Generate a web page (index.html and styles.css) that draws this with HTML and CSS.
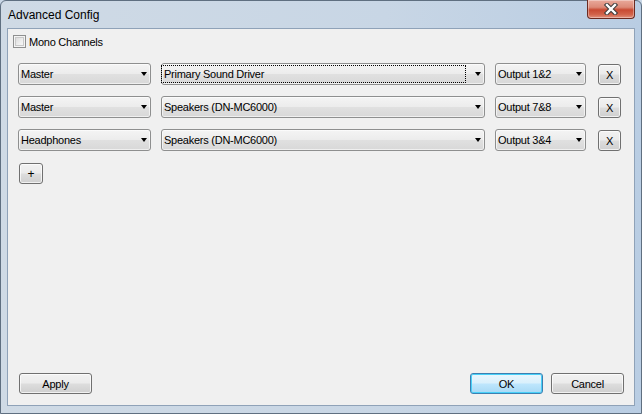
FILE: index.html
```html
<!DOCTYPE html>
<html>
<head>
<meta charset="utf-8">
<link rel="stylesheet" href="styles.css">
</head>
<body>
<div class="window">
  <div class="titlebar">
    <span class="title">Advanced Config</span>
    <div class="close">
      <svg width="18" height="12" viewBox="0 0 18 12">
        <path d="M5 2 L13 10 M13 2 L5 10" stroke="#3a3a3a" stroke-width="4.4" stroke-linecap="square" fill="none"/>
        <path d="M5 2 L13 10 M13 2 L5 10" stroke="#ffffff" stroke-width="2.4" stroke-linecap="square" fill="none"/>
      </svg>
    </div>
  </div>
  <div class="client">
    <label class="mono"><span class="checkbox"></span><span>Mono Channels</span></label>
    <div class="rows">
      <div class="row">
        <div class="combo c1"><span class="ctext">Master</span><span class="arrow"></span></div>
        <div class="combo c2 focused"><span class="ctext"><span class="focus">Primary Sound Driver</span></span><span class="arrow"></span></div>
        <div class="combo c3"><span class="ctext">Output 1&amp;2</span><span class="arrow"></span></div>
        <div class="btn xbtn">X</div>
      </div>
      <div class="row">
        <div class="combo c1"><span class="ctext">Master</span><span class="arrow"></span></div>
        <div class="combo c2"><span class="ctext">Speakers (DN-MC6000)</span><span class="arrow"></span></div>
        <div class="combo c3"><span class="ctext">Output 7&amp;8</span><span class="arrow"></span></div>
        <div class="btn xbtn">X</div>
      </div>
      <div class="row">
        <div class="combo c1"><span class="ctext">Headphones</span><span class="arrow"></span></div>
        <div class="combo c2"><span class="ctext">Speakers (DN-MC6000)</span><span class="arrow"></span></div>
        <div class="combo c3"><span class="ctext">Output 3&amp;4</span><span class="arrow"></span></div>
        <div class="btn xbtn">X</div>
      </div>
    </div>
    <div class="btn plus">+</div>
    <div class="footer">
      <div class="btn wide">Apply</div>
      <div class="spacer"></div>
      <div class="btn wide default">OK</div>
      <div class="btn wide">Cancel</div>
    </div>
  </div>
</div>
</body>
</html>
```
FILE: styles.css
```css
html, body {
  margin: 0;
  padding: 0;
  background: #c9d7e6;
}
.window {
  width: 642px;
  height: 414px;
  box-sizing: border-box;
  display: flex;
  flex-direction: column;
  background: linear-gradient(90deg, #cfdae5 0%, #c8d6e5 60%, #b9cde3 100%);
  border: 1px solid #5f6f80;
  border-radius: 6px 6px 0 0;
  font-family: "Liberation Sans", Arial, sans-serif;
  font-size: 11px;
  letter-spacing: -0.25px;
  color: #000;
}
.titlebar {
  height: 27px;
  display: flex;
  align-items: flex-start;
  justify-content: space-between;
}
.title {
  font-size: 12px;
  letter-spacing: 0;
  margin: 7px 0 0 7px;
  color: #000;
}
.close {
  width: 48px;
  height: 19px;
  margin-right: 6px;
  margin-top: -1px;
  box-sizing: border-box;
  border: 1px solid #6b2a20;
  border-top: none;
  border-radius: 0 0 4px 4px;
  background: linear-gradient(180deg, #e9a99b 0%, #dc8a78 40%, #c84a33 55%, #d2634a 80%, #e1907d 100%);
  box-shadow: inset 0 0 0 1px rgba(255,255,255,0.35);
  display: flex;
  align-items: center;
  justify-content: center;
}
.close svg { display: block; }
.client {
  flex: 1;
  margin: 0 6px 7px 6px;
  border: 1px solid #8fa2b8;
  background: #f0f0f0;
  display: flex;
  flex-direction: column;
}
.mono {
  display: flex;
  align-items: center;
  gap: 3px;
  margin: 6px 0 0 5px;
  height: 13px;
}
.checkbox {
  width: 13px;
  height: 13px;
  box-sizing: border-box;
  border: 1px solid #8e8f8f;
  background: linear-gradient(135deg, #d4d4d4 0%, #f0f0f0 60%, #fbfbfb 100%);
  box-shadow: inset 0 0 0 1px #f4f4f4, inset 0 0 0 2px #c9c9c9;
}
.rows {
  display: flex;
  flex-direction: column;
  gap: 11px;
  margin: 15px 0 0 10px;
}
.row {
  display: flex;
  align-items: flex-start;
  height: 22px;
}
.combo {
  height: 22px;
  box-sizing: border-box;
  border: 1px solid #8e8f8f;
  border-radius: 3px;
  background: linear-gradient(180deg, #f4f4f4 0%, #ececec 48%, #e0e0e0 52%, #d8d8d8 100%);
  box-shadow: inset 0 0 0 1px rgba(255,255,255,0.6);
  display: flex;
  align-items: center;
  justify-content: space-between;
}
.c1 { width: 133px; margin-right: 10px; }
.c2 { width: 324px; margin-right: 10px; }
.c3 { width: 91px; margin-right: 12px; }
.ctext {
  padding-left: 2px;
  line-height: 13px;
  white-space: nowrap;
}
.focused .ctext {
  flex: 1;
  padding-left: 0;
  margin-right: 10px;
}
.focus {
  display: block;
  outline: 1px dotted #000;
  outline-offset: 0;
  padding: 1px 1px 1px 2px;
  line-height: 14px;
}
.arrow {
  width: 0;
  height: 0;
  border-left: 3.5px solid transparent;
  border-right: 3.5px solid transparent;
  border-top: 4px solid #000;
  margin-right: 3px;
}
.btn {
  box-sizing: border-box;
  border: 1px solid #707070;
  border-radius: 3px;
  background: linear-gradient(180deg, #f2f2f2 0%, #ebebeb 48%, #dddddd 52%, #cfcfcf 100%);
  box-shadow: inset 0 0 0 1px rgba(255,255,255,0.7);
  display: flex;
  align-items: center;
  justify-content: center;
  height: 22px;
}
.xbtn {
  width: 23px;
  height: 21px;
  margin-top: 1px;
}
.plus {
  width: 24px;
  height: 21px;
  margin: 12px 0 0 11px;
  font-size: 12px;
}
.footer {
  margin-top: auto;
  display: flex;
  align-items: center;
  padding: 0 10px 11px 11px;
  gap: 8px;
}
.spacer { flex: 1; }
.wide {
  width: 73px;
  height: 21px;
}
.default {
  border-color: #3c7fb1;
  background: linear-gradient(180deg, #eaf6fd 0%, #d9f0fc 48%, #bee6fd 52%, #a7d9f5 100%);
  box-shadow: inset 0 0 0 1px #48d0f8;
}
```
